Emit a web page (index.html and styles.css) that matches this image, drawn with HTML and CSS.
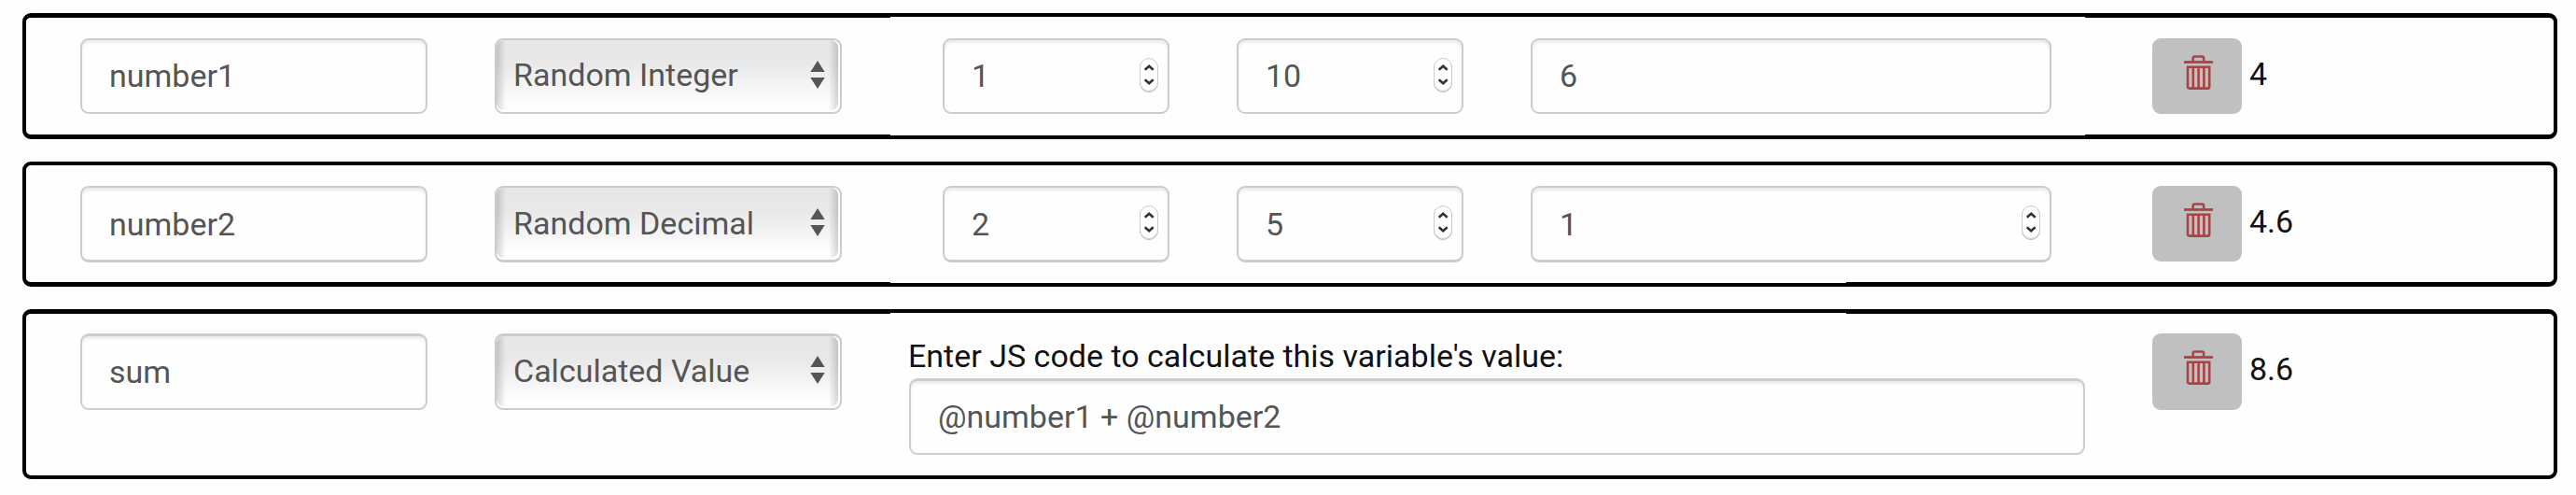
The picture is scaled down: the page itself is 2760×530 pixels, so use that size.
FILE: index.html
```html
<!DOCTYPE html>
<html lang="en">
<head>
<meta charset="utf-8">
<title>Variables</title>
<link rel="stylesheet" href="styles.css">
</head>
<body>
<svg class="defs" width="0" height="0">
  <symbol id="trash" viewBox="0 0 32 38">
    <path d="M0 7.500h31" stroke-width="2.800"/>
    <path d="M9.700 6.500V3.200Q9.700 1.500 11.400 1.500h8Q21.100 1.500 21.100 3.200V6.500M4 12.700h23.200v21.200q0 1.700-1.700 1.700H5.700q-1.700 0-1.700-1.700zM9.800 12.500v23M15.600 12.500v23M21.400 12.500v23" stroke-width="2.600"/>
  </symbol>
  <symbol id="stepper" viewBox="0 0 20 38">
    <rect x=".5" y="1.500" width="19" height="35" rx="9.500" stroke="#bbb"/>
    <rect x=".5" y=".5" width="19" height="35" rx="9.500" fill="#fff" stroke="#ccc"/>
    <path d="M5.700 12.700l4.500-4 4.500 4M5.700 23.200l4.500 4 4.500-4" stroke="#333" stroke-width="2.600"/>
  </symbol>
  <symbol id="arrows" viewBox="0 0 16 30">
    <path d="M8 0l7.700 12H.3zM8 30L.3 18h15.400z"/>
  </symbol>
</svg>
<main class="variables">
  <section class="row row-int">
    <div class="field name">number1</div>
    <div class="select"><span>Random Integer</span><svg class="arrows"><use href="#arrows"/></svg></div>
    <div class="params">
      <div class="field num">1<svg class="stepper"><use href="#stepper"/></svg></div>
      <div class="field num">10<svg class="stepper"><use href="#stepper"/></svg></div>
      <div class="field wide">6</div>
    </div>
    <div class="btn"><svg class="trash"><use href="#trash"/></svg></div>
    <div class="value">4</div>
  </section>
  <section class="row row-dec">
    <div class="field name">number2</div>
    <div class="select"><span>Random Decimal</span><svg class="arrows"><use href="#arrows"/></svg></div>
    <div class="params">
      <div class="field num">2<svg class="stepper"><use href="#stepper"/></svg></div>
      <div class="field num">5<svg class="stepper"><use href="#stepper"/></svg></div>
      <div class="field wide">1<svg class="stepper"><use href="#stepper"/></svg></div>
    </div>
    <div class="btn"><svg class="trash"><use href="#trash"/></svg></div>
    <div class="value">4.6</div>
  </section>
  <section class="row row-calc">
    <div class="field name">sum</div>
    <div class="select"><span>Calculated Value</span><svg class="arrows"><use href="#arrows"/></svg></div>
    <div class="params code">
      <div class="label">Enter JS code to calculate this variable's value:</div>
      <div class="field">@number1 + @number2</div>
    </div>
    <div class="btn"><svg class="trash"><use href="#trash"/></svg></div>
    <div class="value">8.6</div>
  </section>
</main>
</body>
</html>
```
FILE: styles.css
```css
* { box-sizing: border-box; }
body {
  margin: 0;
  background: #fefefe;
  color: #111;
  font: 34px/40px Roboto, sans-serif;
}
.defs { display: block; }
.variables {
  display: flex;
  flex-direction: column;
  gap: 24px;
  padding: 14px 20px 0 24px;
}
.row {
  display: flex;
  align-items: flex-start;
  border: 4px solid #000;
  border-radius: 9px;
  padding-left: 58px;
  background: #fefefe;
}
.row-int { height: 135px; border-top-width: 5px; border-bottom-width: 5px; }
.row-dec { height: 134px; border-bottom-width: 5px; }
.row-calc { height: 182px; border-top-width: 5px; }
.field, .select {
  display: flex;
  justify-content: space-between;
  flex: none;
  height: 81px;
  border: 2px solid #ccc;
  border-radius: 9px;
  background: #fefefe;
  color: #555;
}
.field {
  padding: 18px 10px 0 29px;
  box-shadow: inset 0 3px 3px rgba(0, 0, 0, .075);
}
.name, .select { width: 372px; }
.name, .select, .btn, .value { margin-top: 22px; }
.select {
  position: relative;
  margin-left: 72px;
  margin-right: 52px;
  padding: 17px 16px 0 18px;
}
/* Glossy face, inset from the right and bottom edges */
.select::before {
  content: "";
  position: absolute;
  inset: 0 2px 2px 0;
  border-radius: 8px;
  background:
    linear-gradient(90deg, rgba(0,0,0,.16), transparent 10px, transparent calc(100% - 10px), rgba(0,0,0,.16)),
    linear-gradient(#e6e6e6, #e9e9e9 35%, #fefefe 92%);
}
.select span, .arrows { position: relative; }
.arrows { width: 16px; height: 30px; margin-top: 5px; fill: #555; }
.stepper { width: 20px; height: 38px; margin-top: 1px; fill: none; }
.params {
  display: flex;
  flex: none;
  gap: 72px;
  align-self: stretch;
  width: 1280px;
  margin: -1px 72px -1px 0;
  padding: 23px 0 0 56px;
  background: linear-gradient(#fefefe, #fefefe) no-repeat 0 0 / 1280px 100%;
}
.num { width: 243px; }
.wide { width: 558px; }
.btn {
  flex: none;
  width: 96px;
  height: 81px;
  padding: 18px 0 0 34px;
  border-radius: 9px;
  background: #c0c0c0;
}
.trash { display: block; width: 32px; height: 38px; fill: none; stroke: #aa4444; }
.value { margin-left: 8px; padding-top: 18px; }
.row-dec .params { margin-top: 0; padding-top: 22px; background-size: 1024px 100%; }
.row-dec .field, .row-dec .select { height: 82px; border-bottom-width: 3px; }
.row-dec .field { padding-top: 19px; }
.row-dec .select { padding-top: 18px; }
.row-dec .stepper { margin-top: 0; }
.row-dec .arrows, .row-calc .arrows { margin-top: 4px; }
.row-calc .name, .row-calc .select, .row-calc .btn, .row-calc .value { margin-top: 21px; }
.row-calc .field, .row-calc .select, .row-calc .btn { height: 82px; }
.row-calc .field, .row-calc .select { border-top-width: 3px; }
.row-calc .params {
  flex-direction: column;
  gap: 0;
  margin-bottom: 0;
  padding: 26px 0 0 20px;
  background-size: 1024px 100%;
}
.label { height: 44px; margin-left: -1px; }
```
